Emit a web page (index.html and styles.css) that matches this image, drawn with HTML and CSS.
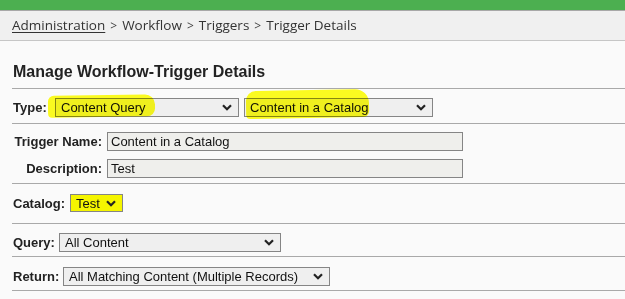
FILE: index.html
```html
<!DOCTYPE html>
<html lang="en">
<head>
<meta charset="utf-8">
<title>Manage Workflow-Trigger Details</title>
<link rel="stylesheet" href="styles.css">
</head>
<body>
<div class="topbar"></div>
<nav class="crumbs">
  <a href="#" class="crumb-link">Administration</a>
  <span class="sep">&gt;</span>
  <span>Workflow</span>
  <span class="sep">&gt;</span>
  <span>Triggers</span>
  <span class="sep">&gt;</span>
  <span>Trigger Details</span>
</nav>
<main class="content">
  <h1 class="title">Manage Workflow-Trigger Details</h1>

  <div class="row row-type">
    <label class="lbl">Type:</label>
    <div class="hl-wrap">
      <select class="sel sel-type1"><option>Content Query</option></select>
      <span class="hl hl-1"></span>
    </div>
    <div class="hl-wrap">
      <select class="sel sel-type2"><option>Content in a Catalog</option></select>
      <span class="hl hl-2"></span>
    </div>
  </div>

  <div class="row row-names">
    <div class="field-grid">
      <label class="lbl rlbl">Trigger Name:</label>
      <input class="txt" type="text" value="Content in a Catalog">
      <label class="lbl rlbl">Description:</label>
      <input class="txt" type="text" value="Test">
    </div>
  </div>

  <div class="row row-catalog">
    <label class="lbl">Catalog:</label>
    <select class="sel sel-cat"><option>Test</option></select>
  </div>

  <div class="row row-query">
    <label class="lbl">Query:</label>
    <select class="sel sel-query"><option>All Content</option></select>
  </div>

  <div class="row row-return">
    <label class="lbl">Return:</label>
    <select class="sel sel-return"><option>All Matching Content (Multiple Records)</option></select>
  </div>
</main>
</body>
</html>
```

FILE: styles.css
```css
html, body {
  margin: 0;
  padding: 0;
  background: #fafafa;
  overflow: hidden;
}
body {
  font-family: "Liberation Sans", Arial, sans-serif;
  color: #222;
}
.topbar {
  height: 10px;
  background: #4caf50;
  border-bottom: 1px solid #a8a8a8;
}
.crumbs {
  box-sizing: border-box;
  height: 30px;
  background: #f0f0f0;
  border-bottom: 1px solid #c6c6c6;
  padding: 0 0 1px 12px;
  display: flex;
  align-items: center;
  gap: 5px;
  font-family: "Open Sans", "Noto Sans", sans-serif;
  font-size: 13.5px;
  color: #333;
}
.crumb-link {
  color: #333;
  text-decoration: underline;
  text-underline-offset: 2px;
}
.sep {
  font-size: 12px;
  color: #444;
}
.content {
  margin-left: 12px;
}
.title {
  margin: 0;
  padding: 21px 0 6px 1px;
  line-height: 20px;
  font-size: 16px;
  font-weight: bold;
  color: #222;
  border-bottom: 1px solid #a9a9a9;
}
.row {
  display: flex;
  align-items: center;
  border-bottom: 1px solid #a9a9a9;
  font-size: 13px;
}
.lbl {
  font-weight: bold;
  color: #222;
  font-size: 13px;
  padding-left: 1px;
}
.row-type { padding: 9px 0 6px; }
.row-type .lbl { width: 42px; }
.row-names { padding: 8px 0 5px; }
.row-catalog { padding: 10px 0 11px; }
.row-catalog .lbl { width: 57px; }
.row-query { padding: 9px 0 4px; }
.row-query .lbl { width: 46px; }
.row-return { padding: 10px 0 4px; }
.row-return .lbl { width: 50px; }

.field-grid {
  display: grid;
  grid-template-columns: 90px 356px;
  column-gap: 5px;
  row-gap: 8px;
  align-items: center;
}
.rlbl { text-align: right; }

.sel {
  -webkit-appearance: none;
  appearance: none;
  box-sizing: border-box;
  height: 19px;
  margin: 0;
  padding: 0 20px 0 5px;
  border: 1px solid #858585;
  border-radius: 0;
  background-color: #efefef;
  background-image: url("data:image/svg+xml;utf8,<svg xmlns='http://www.w3.org/2000/svg' width='10' height='7' viewBox='0 0 10 7'><path d='M1 1.2 L5 5.2 L9 1.2' fill='none' stroke='%23222' stroke-width='2.2'/></svg>");
  background-repeat: no-repeat;
  background-position: right 6px center;
  background-size: 10px 7px;
  font-family: "Liberation Sans", Arial, sans-serif;
  font-size: 13px;
  color: #111;
  line-height: 17px;
}
.sel-type1 { width: 184px; }
.sel-type2 { width: 189px; margin-left: 5px; }
.sel-cat { width: 53px; height: 18px; background-color: #f5f500; }
.sel-query { width: 222px; }
.sel-return { width: 267px; }

.txt {
  box-sizing: border-box;
  width: 356px;
  height: 19px;
  margin: 0;
  padding: 0 3px;
  border: 1px solid #858585;
  background: #efefec;
  font-family: "Liberation Sans", Arial, sans-serif;
  font-size: 13px;
  color: #111;
}

.hl-wrap {
  position: relative;
  display: flex;
}
.hl {
  position: absolute;
  background: #ffff20;
  mix-blend-mode: multiply;
  pointer-events: none;
  border-radius: 6px 10px 8px 4px;
}
.hl-1 { left: -7px; top: -3px; width: 107px; height: 22px; transform: rotate(-0.8deg); }
.hl-2 { left: 7px; top: -8px; width: 123px; height: 28px; border-radius: 10px 14px 6px 4px; transform: rotate(-1deg); }
```
